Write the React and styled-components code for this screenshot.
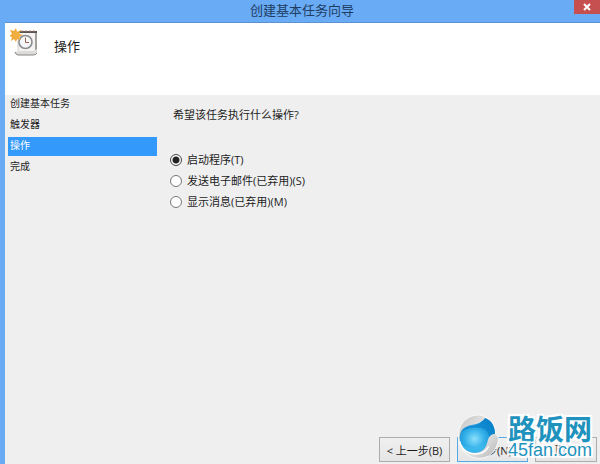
import React, { useState } from "react";
import styled, { createGlobalStyle } from "styled-components";

const GlobalStyle = createGlobalStyle`
  * {
    box-sizing: border-box;
  }

  body {
    margin: 0;
    background: #efefef;
    color: #1c1c1c;
    font-family: "Open Sans", "Noto Sans CJK SC", sans-serif;
    font-size: 11px;
    line-height: 20px;
  }

  button {
    font-family: inherit;
  }
`;

const Window = styled.div`
  position: relative;
  display: flex;
  flex-direction: column;
  min-height: 100vh;
  border-left: 5px solid #6aabf5;
`;

const TitleBar = styled.div`
  display: flex;
  align-items: flex-start;
  height: 23px;
  background: #6aabf5;
  border-bottom: 1px solid #5b93d2;
`;

const WindowTitle = styled.h1`
  flex: 1;
  margin: 0;
  padding-left: 25px;
  color: #1d3d63;
  font-size: 13px;
  font-weight: 400;
  line-height: 20px;
  text-align: center;
`;

const CloseButton = styled.button`
  display: flex;
  align-items: center;
  justify-content: center;
  width: 26px;
  height: 14px;
  padding: 0;
  border: none;
  background: #c6504f;
`;

const Header = styled.header`
  display: flex;
  align-items: flex-start;
  gap: 16px;
  height: 72px;
  padding: 5px;
  background: #fff;

  h2 {
    margin: 0;
    padding-top: 8px;
    font-size: 13px;
    font-weight: 400;
  }
`;

const Body = styled.div`
  display: flex;
  flex: 1;
`;

const Steps = styled.ol`
  display: flex;
  flex-direction: column;
  gap: 2px;
  width: 152px;
  margin: 0;
  padding: 0 0 0 3px;
  list-style: none;
`;

const Step = styled.li`
  height: 19px;
  padding-left: 2px;
  background: ${(props) => (props.$active ? "#3399fb" : "transparent")};
  color: ${(props) => (props.$active ? "#fff" : "#1c1c1c")};
  font-size: 10px;
  line-height: 16px;
`;

const Content = styled.main`
  flex: 1;
  padding: 10px 13px;
`;

const Options = styled.fieldset`
  display: flex;
  flex-direction: column;
  align-items: flex-start;
  gap: 1px;
  margin: 0;
  padding: 0;
  border: none;

  legend {
    margin-bottom: 25px;
    padding: 0 3px;
  }
`;

const Option = styled.label`
  display: flex;
  align-items: center;
  gap: 5px;

  input {
    appearance: none;
    width: 12px;
    height: 12px;
    margin: 0;
    border: 1px solid #777;
    border-radius: 50%;
    background: #fff;
  }

  input:checked {
    border-color: #444;
    background: radial-gradient(circle, #222 3px, #fff 4px);
  }
`;

const Footer = styled.footer`
  display: flex;
  justify-content: flex-end;
  gap: 7px;
  padding: 0 3px 2px;
`;

const DialogButton = styled.button`
  width: ${(props) => (props.$small ? "62px" : "71px")};
  height: 25px;
  padding: 0;
  border: 1px solid ${(props) => (props.$primary ? "#56a9e6" : "#acacac")};
  background: linear-gradient(#f0f0f0, #e5e5e5);
  color: #1c1c1c;
  font-size: 11px;
`;

// Site mark floating over the buttons
const SiteMark = styled.div`
  position: absolute;
  right: 8px;
  bottom: 4px;
  display: flex;
  align-items: center;
  gap: 9px;
  pointer-events: none;
`;

const SiteName = styled.div`
  display: flex;
  flex-direction: column;
  color: #1f93bd;
  text-shadow: 1px 0 #fff, -1px 0 #fff, 0 1px #fff, 0 -1px #fff, 2px 2px 1px #fff,
    -2px -2px 1px #fff, 2px -2px 1px #fff, -2px 2px 1px #fff;

  strong {
    font-family: "Noto Sans CJK SC", sans-serif;
    font-size: 28px;
    font-weight: 700;
    line-height: 26px;
  }

  span {
    font-family: "Liberation Sans", sans-serif;
    font-size: 18px;
    line-height: 18px;
  }
`;

const steps = ["创建基本任务", "触发器", "操作", "完成"];

const actions = [
  { id: "program", label: "启动程序(T)" },
  { id: "email", label: "发送电子邮件(已弃用)(S)" },
  { id: "message", label: "显示消息(已弃用)(M)" },
];

const TaskIcon = () => (
  <svg width="28" height="28" viewBox="0 0 28 28" aria-hidden="true">
    <path d="M8 3h19v23H8z" fill="#f4f3f1" />
    <path d="M26 3v23" stroke="#a3a19e" strokeWidth="2" />
    <path d="M8 5v18" stroke="#cfcdca" />
    <path d="M5 23q2 1 4 0h15l3-2v4q-1 2-3 2H7q-2-1-2-4z" fill="#dcdbd9" />
    <path d="M5 24q1 3 3 3h15q3 0 4-2" fill="none" stroke="#858585" />
    <path d="M9 4h18" stroke="#5c5450" strokeWidth="2" />
    <path d="M11 3h2m2 0h2m2 0h2m2 0h2" stroke="#b08379" />
    <circle cx="15.5" cy="14" r="6.5" fill="#f6f7f9" stroke="#8b8d90" strokeWidth="1.6" />
    <path d="M15.5 9.500v5h3.500" fill="none" stroke="#a45e52" />
    <path
      d="m6 0 1 4 4-2-2 4 4 1-4 2 2 3-4-1-1 3-2-3-3 2 1-4-3-1 3-2-2-4 4 1z"
      fill="#efa735"
    />
    <circle cx="6" cy="7" r="3.500" fill="#f2ae40" />
  </svg>
);

const GlobeLogo = () => (
  <svg width="42" height="46" viewBox="16 17 126 138" aria-hidden="true">
    <defs>
      <radialGradient id="blue" cx="42%" cy="60%" r="62%">
        <stop offset="0" stopColor="#8be0fb" />
        <stop offset="0.45" stopColor="#35b1ea" />
        <stop offset="1" stopColor="#0b80c8" />
      </radialGradient>
      <linearGradient id="silver" x1="0" y1="0" x2="1" y2="1">
        <stop offset="0" stopColor="#c2c2c2" />
        <stop offset="0.5" stopColor="#ececec" />
        <stop offset="1" stopColor="#b5b5b5" />
      </linearGradient>
    </defs>
    <path
      d="M20 88C18 52 42 22 76 20c12-1 22 3 29 10 17 7 27 25 27 48 9 5 10 18 5 30-9 27-27 41-53 42C48 150 22 124 20 88z"
      fill="url(#silver)"
      stroke="#fafafa"
      strokeWidth="3"
    />
    <path
      d="M24 88c1-24 15-34 36-38 20-3 30-8 40-20 18 5 29 22 30 46-16 1-20 12-23 26-5 20-18 31-38 31-26 0-44-20-45-45z"
      fill="url(#blue)"
    />
    <path
      d="M27 72C40 50 66 56 84 46c7-4 12-9 16-16 18 5 29 22 30 46-9 0-14 4-17 10-4-20-16-28-33-28-21 0-36 0-53 14z"
      fill="#0a84cb"
      opacity="0.75"
    />
    <path
      d="M28 106c18 18 54 16 78-6-6 22-18 33-37 33-20 0-35-11-41-27z"
      fill="#45bff2"
      opacity="0.6"
    />
    <path d="M24 100c8 28 30 38 50 37 17-1 30-9 37-23" fill="none" stroke="#fff" strokeWidth="4" />
  </svg>
);

const App = () => {
  const [action, setAction] = useState("program");

  return (
    <>
      <GlobalStyle />
      <Window>
        <TitleBar>
          <WindowTitle>创建基本任务向导</WindowTitle>
          <CloseButton type="button" aria-label="关闭">
            <svg width="8" height="8" viewBox="0 0 8 8">
              <path d="m1 1 6 6m0-6-6 6" stroke="#fff" strokeWidth="2" />
            </svg>
          </CloseButton>
        </TitleBar>
        <Header>
          <TaskIcon />
          <h2>操作</h2>
        </Header>
        <Body>
          <Steps>
            {steps.map((step) => (
              <Step key={step} $active={step === "操作"}>
                {step}
              </Step>
            ))}
          </Steps>
          <Content>
            <Options>
              <legend>希望该任务执行什么操作?</legend>
              {actions.map((item) => (
                <Option key={item.id}>
                  <input
                    type="radio"
                    name="action"
                    checked={action === item.id}
                    onChange={() => setAction(item.id)}
                  />
                  {item.label}
                </Option>
              ))}
            </Options>
          </Content>
        </Body>
        <Footer>
          <DialogButton type="button">&lt; 上一步(B)</DialogButton>
          <DialogButton type="button" $primary>
            下一步(N) &gt;
          </DialogButton>
          <DialogButton type="button" $small>
            取消
          </DialogButton>
        </Footer>
        <SiteMark>
          <GlobeLogo />
          <SiteName>
            <strong>路饭网</strong>
            <span>45fan.com</span>
          </SiteName>
        </SiteMark>
      </Window>
    </>
  );
};

export default App;
